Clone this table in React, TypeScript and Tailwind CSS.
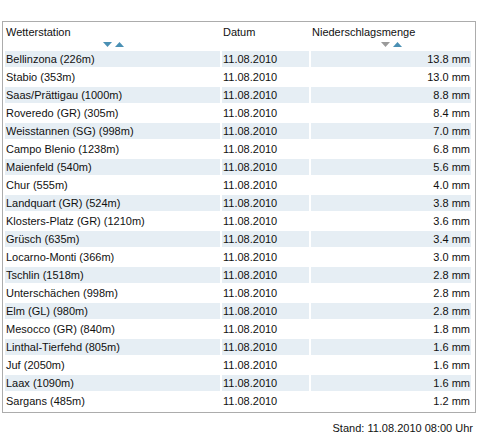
const ROWS: [string, string][] = [
  ["Bellinzona (226m)", "13.8"],
  ["Stabio (353m)", "13.0"],
  ["Saas/Prättigau (1000m)", "8.8"],
  ["Roveredo (GR) (305m)", "8.4"],
  ["Weisstannen (SG) (998m)", "7.0"],
  ["Campo Blenio (1238m)", "6.8"],
  ["Maienfeld (540m)", "5.6"],
  ["Chur (555m)", "4.0"],
  ["Landquart (GR) (524m)", "3.8"],
  ["Klosters-Platz (GR) (1210m)", "3.6"],
  ["Grüsch (635m)", "3.4"],
  ["Locarno-Monti (366m)", "3.0"],
  ["Tschlin (1518m)", "2.8"],
  ["Unterschächen (998m)", "2.8"],
  ["Elm (GL) (980m)", "2.8"],
  ["Mesocco (GR) (840m)", "1.8"],
  ["Linthal-Tierfehd (805m)", "1.6"],
  ["Juf (2050m)", "1.6"],
  ["Laax (1090m)", "1.6"],
  ["Sargans (485m)", "1.2"],
];

function SortArrows({ downActive }: { downActive: boolean }) {
  return (
    <div className="mt-[3px] flex h-[5px] justify-center gap-[3px]">
      <svg width="9" height="5" viewBox="0 0 9 5">
        <path d="M0 0h9L4.5 5z" fill={downActive ? "#4a90b4" : "#9a9a9a"} />
      </svg>
      <svg width="9" height="5" viewBox="0 0 9 5">
        <path d="M0 5h9L4.5 0z" fill="#4a90b4" />
      </svg>
    </div>
  );
}

export default function App() {
  return (
    <div className="w-[485px] h-[443px] bg-white pt-[21px] pl-[2px] text-[11px] text-[#111] font-['Liberation_Sans',Arial,sans-serif]">
      <div className="w-[474px] border border-[#acacac] pl-[2px] pr-[4px] pt-[3px] pb-[3px]">
        <div className="grid grid-cols-[215px_87px_160px] gap-[2px]">
          <div className="pt-[1px] pl-[1px] pb-[2px]">
            <div className="h-[13px] leading-[13px]">Wetterstation</div>
            <SortArrows downActive />
          </div>
          <div className="pt-[1px] pl-[1px]">
            <div className="h-[13px] leading-[13px]">Datum</div>
          </div>
          <div className="pt-[1px] pl-[1px]">
            <div className="h-[13px] leading-[13px]">Niederschlagsmenge</div>
            <SortArrows downActive={false} />
          </div>
          {ROWS.map(([name, mm], i) => {
            const bg = i % 2 === 0 ? "bg-[#e6eef4]" : "bg-white";
            return [
              <div key={name + "a"} className={`${bg} h-[16px] pl-[1px] leading-[16px] whitespace-nowrap`}>
                {name}
              </div>,
              <div key={name + "b"} className={`${bg} h-[16px] pl-[1px] leading-[16px]`}>
                11.08.2010
              </div>,
              <div key={name + "c"} className={`${bg} h-[16px] pr-[1px] text-right leading-[16px]`}>
                {mm} mm
              </div>,
            ];
          })}
        </div>
      </div>
      <div className="w-[474px] pr-[3px] mt-[9px] text-right leading-[13px]">
        Stand: 11.08.2010 08:00 Uhr
      </div>
    </div>
  );
}
